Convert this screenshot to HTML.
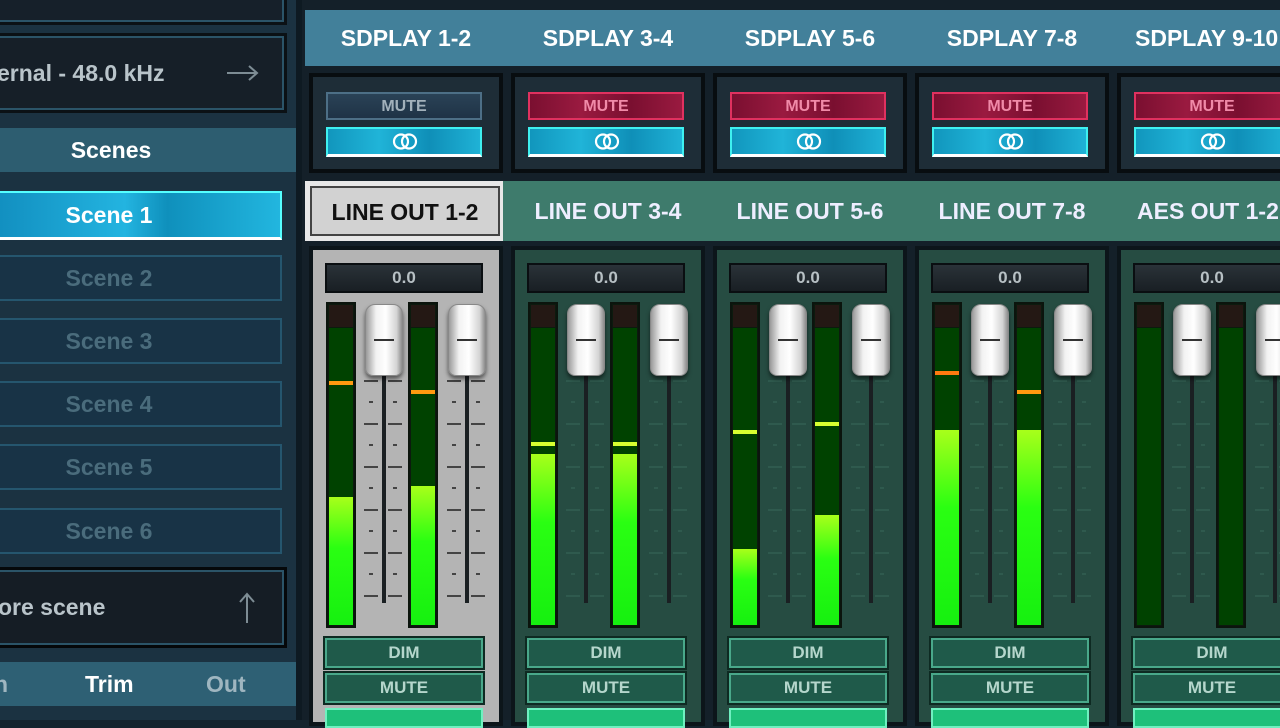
<!DOCTYPE html>
<html><head><meta charset="utf-8"><style>
*{box-sizing:border-box;margin:0;padding:0}
body{width:1280px;height:720px;overflow:hidden;background:#14242e;font-family:"Liberation Sans",Arial,sans-serif;position:relative}
.a{position:absolute}
#left{left:0;top:0;width:302px;height:720px;background:#1b3241}
.sc{position:absolute;left:-4px;width:286px;height:46px;border:2px solid #25566e;background:#183346;color:#4a6c7c;font-size:23px;font-weight:bold;text-align:center;line-height:42px;padding-right:60px}
.ch{position:absolute;top:0;width:202px;height:720px}
.ch .hd{position:absolute;left:0;top:10px;width:202px;height:56px;color:#fff;font-weight:bold;font-size:23px;text-align:center;line-height:56px;white-space:nowrap}
.mb{position:absolute;left:4px;top:73px;width:194px;height:100px;background:#1e2d37;border:4px solid #080d10}
.mute{position:absolute;left:21px;top:92px;width:156px;height:28px;font-size:16px;font-weight:bold;text-align:center;line-height:25px}
.mr{background:linear-gradient(90deg,#7a0f30,#9a1a40,#7a0f30,#9a1a40);border:2px solid #e0315f;color:#f08aa8}
.link{position:absolute;left:21px;top:127px;width:156px;height:30px;background:linear-gradient(90deg,#1196bd,#20b4d8,#0f8fb8,#1fb2d6);border:2px solid #3ef0f0;border-bottom:3px solid #fff}
.rings{position:absolute;left:64px;top:3px;width:26px;height:19px}
.lo{position:absolute;left:0;top:181px;width:202px;height:60px;color:#eef;font-weight:bold;font-size:23px;text-align:center;line-height:60px;white-space:nowrap}
.st{position:absolute;left:4px;top:246px;width:194px;height:480px;border:4px solid #0c151a;background:#264c42}
.disp{position:absolute;left:20px;top:263px;width:158px;height:30px;background:linear-gradient(#2a3238,#191f24);border:2px solid #0a0e11;color:#b7c0c4;font-weight:bold;font-size:17px;text-align:center;line-height:26px}
.m{position:absolute;top:302px;width:30px;height:326px;background:#0c1a0e;border:2px solid #0b140d}
.m .dk{position:absolute;left:1px;right:1px;top:24px;bottom:1px;background:#004200}
.m .rd{position:absolute;left:1px;right:1px;top:1px;height:22px;background:#241814}
.m .fl{position:absolute;left:1px;right:1px;bottom:1px;background:linear-gradient(#a8ff1a,#2aff12 40%,#16f010)}
.m .pk{position:absolute;left:1px;right:1px;height:4px}
.tr{position:absolute;top:375px;width:4px;height:228px;background:#1a1f22}
.tk{position:absolute;top:379px;width:14px;height:220px;background:repeating-linear-gradient(#0000 0 1px,var(--t) 1px 3px,#0000 3px 43px)}
.tk:after{content:"";position:absolute;left:5px;width:4px;top:21px;bottom:0;background:repeating-linear-gradient(#0000 0 1px,var(--t) 1px 3px,#0000 3px 43px)}
.kn{position:absolute;top:304px;width:38px;height:72px;border-radius:10px 10px 8px 8px;background:linear-gradient(90deg,#9a9a9a,#f2f2f2 28%,#fff 55%,#d4d4d4 85%,#8c8c8c);box-shadow:0 3px 4px #0008;border:1px solid #888}
.kn:after{content:"";position:absolute;left:8px;right:8px;top:34px;height:2px;background:#333}
.b{position:absolute;left:20px;width:158px;height:30px;background:#1f5a4a;border:2px solid #49a88a;outline:2px solid #0e2a22;color:#b5d6cc;font-weight:bold;font-size:17px;text-align:center;line-height:26px}
.gl{position:absolute;left:20px;top:708px;width:158px;height:20px;background:#1ec07a;border:2px solid #6ff0c0}
</style></head><body>
<div class="a" style="left:302px;top:0;width:978px;height:720px;background:#142029"></div>
<div class="a" style="left:305px;top:10px;width:975px;height:56px;background:#42809a"></div>
<div class="a" style="left:305px;top:181px;width:975px;height:60px;background:#3e7b6c"></div>

<div id="left" class="a">
 <div class="a" style="left:-4px;top:-10px;width:288px;height:32px;border:2px solid #2b5468;background:#16202a;outline:3px solid #0b1115"></div>
 <div class="a" style="left:-4px;top:36px;width:288px;height:74px;border:2px solid #2b5468;background:#161f28;outline:3px solid #0b1115;color:#b9c4ca;font-size:23px;font-weight:bold;line-height:70px;white-space:nowrap;overflow:hidden"><span style="position:absolute;left:-1px">ernal - 48.0 kHz</span><svg style="position:absolute;left:228px;top:26px" width="34" height="18" viewBox="0 0 34 18"><path d="M1 9H31M23 2L31 9L23 16" fill="none" stroke="#7d8c94" stroke-width="2"/></svg></div>
 <div class="a" style="left:0;top:128px;width:302px;height:44px;background:#2d5d70;color:#fff;font-size:23px;font-weight:bold;text-align:center;line-height:44px;padding-right:80px">Scenes</div>
 <div class="a" style="left:-4px;top:191px;width:286px;height:49px;background:linear-gradient(90deg,#128fc0,#23b4e0 45%,#0f90bc 60%,#22b6df);border:2px solid #5ff;border-bottom:3px solid #fff;color:#fff;font-size:23px;font-weight:bold;text-align:center;line-height:44px;padding-right:60px">Scene 1</div>
 <div class="sc" style="top:255px">Scene 2</div>
 <div class="sc" style="top:318px">Scene 3</div>
 <div class="sc" style="top:381px">Scene 4</div>
 <div class="sc" style="top:444px">Scene 5</div>
 <div class="sc" style="top:508px">Scene 6</div>
 <div class="a" style="left:-4px;top:570px;width:288px;height:75px;border:2px solid #2b5468;background:#151d25;outline:3px solid #05080a;color:#b9c4ca;font-size:23px;font-weight:bold;line-height:70px;white-space:nowrap"><span style="position:absolute;left:0">ore scene</span><svg style="position:absolute;left:240px;top:20px" width="18" height="32" viewBox="0 0 18 32"><path d="M9 31V2M2 10L9 2L16 10" fill="none" stroke="#7d8c94" stroke-width="2"/></svg></div>
 <div class="a" style="left:0;top:662px;width:302px;height:44px;background:#2e6074;font-size:23px;font-weight:bold;line-height:44px;color:#fff;white-space:nowrap">
  <span style="position:absolute;left:-6px;color:#9fb6c0">n</span><span style="position:absolute;left:85px">Trim</span><span style="position:absolute;left:206px;color:#9fb6c0">Out</span></div>
 <div class="a" style="left:296px;top:0;width:6px;height:720px;background:#0e1a22"></div>
</div>

<!-- channel 1 -->
<div class="ch" style="left:305px">
 <div class="hd">SDPLAY 1-2</div>
 <div class="mb"></div>
 <div class="mute" style="background:linear-gradient(#2a4256,#1f3346);border:2px solid #4d6f86;color:#a2b1bb">MUTE</div>
 <div class="link"><svg class="rings" viewBox="0 0 26 19"><circle cx="9" cy="9.5" r="7" fill="none" stroke="#fff" stroke-width="2.2"/><circle cx="17" cy="9.5" r="7" fill="none" stroke="#fff" stroke-width="2.2"/></svg></div>
 <div class="a" style="left:0;top:181px;width:198px;height:60px;background:#e8e8e8"></div>
 <div class="lo" style="left:5px;top:186px;width:190px;height:50px;line-height:48px;background:#d2d2d2;border:2px solid #444;color:#111">LINE OUT 1-2</div>
 <div class="st" style="background:#b4b4b4;border-color:#0c151a"></div>
 <div class="disp">0.0</div>
 <div class="tk" style="left:59px;--t:#444"></div><div class="tk" style="left:83px;--t:#444"></div><div class="tk" style="left:142px;--t:#444"></div><div class="tk" style="left:166px;--t:#444"></div>
 <div class="tr" style="left:77px"></div><div class="tr" style="left:160px"></div>
 <div class="m" style="left:21px"><div class="rd"></div><div class="dk"></div><div class="fl" style="top:193px"></div><div class="pk" style="top:77px;background:#ff9a10"></div></div>
 <div class="m" style="left:103px"><div class="rd"></div><div class="dk"></div><div class="fl" style="top:182px"></div><div class="pk" style="top:86px;background:#ff9a10"></div></div>
 <div class="kn" style="left:60px"></div><div class="kn" style="left:143px"></div>
 <div class="b" style="top:638px">DIM</div><div class="b" style="top:673px">MUTE</div><div class="gl"></div>
</div>

<!-- channel 2 -->
<div class="ch" style="left:507px">
 <div class="hd">SDPLAY 3-4</div>
 <div class="mb"></div>
 <div class="mute mr">MUTE</div>
 <div class="link"><svg class="rings" viewBox="0 0 26 19"><circle cx="9" cy="9.5" r="7" fill="none" stroke="#fff" stroke-width="2.2"/><circle cx="17" cy="9.5" r="7" fill="none" stroke="#fff" stroke-width="2.2"/></svg></div>
 <div class="lo">LINE OUT 3-4</div>
 <div class="st"></div>
 <div class="disp">0.0</div>
 <div class="tk" style="left:59px;--t:#2f5a4e"></div><div class="tk" style="left:83px;--t:#2f5a4e"></div><div class="tk" style="left:142px;--t:#2f5a4e"></div><div class="tk" style="left:166px;--t:#2f5a4e"></div>
 <div class="tr" style="left:77px"></div><div class="tr" style="left:160px"></div>
 <div class="m" style="left:21px"><div class="rd"></div><div class="dk"></div><div class="fl" style="top:150px"></div><div class="pk" style="top:138px;background:#d8ff30"></div></div>
 <div class="m" style="left:103px"><div class="rd"></div><div class="dk"></div><div class="fl" style="top:150px"></div><div class="pk" style="top:138px;background:#d8ff30"></div></div>
 <div class="kn" style="left:60px"></div><div class="kn" style="left:143px"></div>
 <div class="b" style="top:638px">DIM</div><div class="b" style="top:673px">MUTE</div><div class="gl"></div>
</div>

<!-- channel 3 -->
<div class="ch" style="left:709px">
 <div class="hd">SDPLAY 5-6</div>
 <div class="mb"></div>
 <div class="mute mr">MUTE</div>
 <div class="link"><svg class="rings" viewBox="0 0 26 19"><circle cx="9" cy="9.5" r="7" fill="none" stroke="#fff" stroke-width="2.2"/><circle cx="17" cy="9.5" r="7" fill="none" stroke="#fff" stroke-width="2.2"/></svg></div>
 <div class="lo">LINE OUT 5-6</div>
 <div class="st"></div>
 <div class="disp">0.0</div>
 <div class="tk" style="left:59px;--t:#2f5a4e"></div><div class="tk" style="left:83px;--t:#2f5a4e"></div><div class="tk" style="left:142px;--t:#2f5a4e"></div><div class="tk" style="left:166px;--t:#2f5a4e"></div>
 <div class="tr" style="left:77px"></div><div class="tr" style="left:160px"></div>
 <div class="m" style="left:21px"><div class="rd"></div><div class="dk"></div><div class="fl" style="top:245px"></div><div class="pk" style="top:126px;background:#d8ff30"></div></div>
 <div class="m" style="left:103px"><div class="rd"></div><div class="dk"></div><div class="fl" style="top:211px"></div><div class="pk" style="top:118px;background:#d8ff30"></div></div>
 <div class="kn" style="left:60px"></div><div class="kn" style="left:143px"></div>
 <div class="b" style="top:638px">DIM</div><div class="b" style="top:673px">MUTE</div><div class="gl"></div>
</div>

<!-- channel 4 -->
<div class="ch" style="left:911px">
 <div class="hd">SDPLAY 7-8</div>
 <div class="mb"></div>
 <div class="mute mr">MUTE</div>
 <div class="link"><svg class="rings" viewBox="0 0 26 19"><circle cx="9" cy="9.5" r="7" fill="none" stroke="#fff" stroke-width="2.2"/><circle cx="17" cy="9.5" r="7" fill="none" stroke="#fff" stroke-width="2.2"/></svg></div>
 <div class="lo">LINE OUT 7-8</div>
 <div class="st"></div>
 <div class="disp">0.0</div>
 <div class="tk" style="left:59px;--t:#2f5a4e"></div><div class="tk" style="left:83px;--t:#2f5a4e"></div><div class="tk" style="left:142px;--t:#2f5a4e"></div><div class="tk" style="left:166px;--t:#2f5a4e"></div>
 <div class="tr" style="left:77px"></div><div class="tr" style="left:160px"></div>
 <div class="m" style="left:21px"><div class="rd"></div><div class="dk"></div><div class="fl" style="top:126px"></div><div class="pk" style="top:67px;background:#ff7a10"></div></div>
 <div class="m" style="left:103px"><div class="rd"></div><div class="dk"></div><div class="fl" style="top:126px"></div><div class="pk" style="top:86px;background:#ff9a10"></div></div>
 <div class="kn" style="left:60px"></div><div class="kn" style="left:143px"></div>
 <div class="b" style="top:638px">DIM</div><div class="b" style="top:673px">MUTE</div><div class="gl"></div>
</div>

<!-- channel 5 -->
<div class="ch" style="left:1113px">
 <div class="hd" style="text-align:left;padding-left:22px">SDPLAY 9-10</div>
 <div class="mb" style="width:200px"></div>
 <div class="mute mr">MUTE</div>
 <div class="link"><svg class="rings" viewBox="0 0 26 19"><circle cx="9" cy="9.5" r="7" fill="none" stroke="#fff" stroke-width="2.2"/><circle cx="17" cy="9.5" r="7" fill="none" stroke="#fff" stroke-width="2.2"/></svg></div>
 <div class="lo" style="text-align:left;padding-left:24px">AES OUT 1-2</div>
 <div class="st" style="width:200px"></div>
 <div class="disp">0.0</div>
 <div class="tk" style="left:59px;--t:#2f5a4e"></div><div class="tk" style="left:83px;--t:#2f5a4e"></div><div class="tk" style="left:142px;--t:#2f5a4e"></div><div class="tk" style="left:166px;--t:#2f5a4e"></div>
 <div class="tr" style="left:77px"></div><div class="tr" style="left:160px"></div>
 <div class="m" style="left:21px"><div class="rd"></div><div class="dk"></div></div>
 <div class="m" style="left:103px"><div class="rd"></div><div class="dk"></div></div>
 <div class="kn" style="left:60px"></div><div class="kn" style="left:143px"></div>
 <div class="b" style="top:638px">DIM</div><div class="b" style="top:673px">MUTE</div><div class="gl"></div>
</div>
</body></html>
